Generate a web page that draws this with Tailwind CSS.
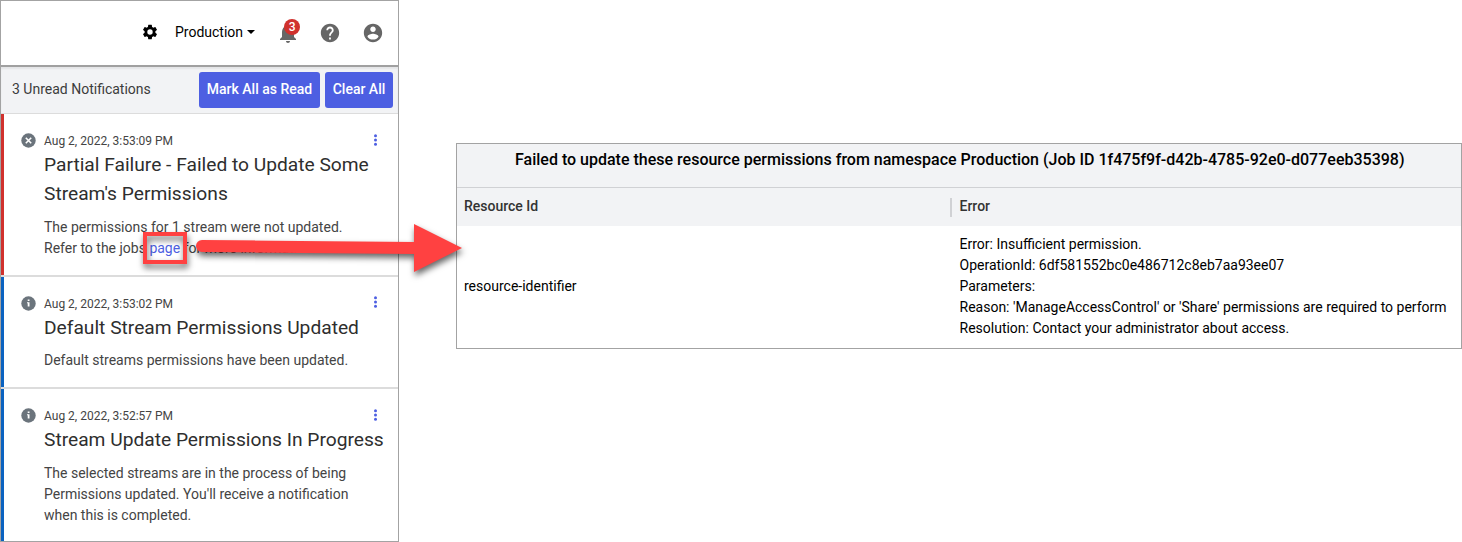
<!DOCTYPE html>
<html lang="en">
<head>
<meta charset="utf-8">
<title>Notifications</title>
<script src="https://cdn.jsdelivr.net/npm/@tailwindcss/browser@4"></script>
</head>
<body class="relative h-[542px] w-[1462px] overflow-hidden bg-white font-['Roboto',sans-serif] text-[14px] leading-[21px] text-black">
<div class="flex items-start gap-[57px]">

  <aside class="flex h-[542px] w-[399px] shrink-0 flex-col border border-[#a3a3a3] bg-white">
    <header class="flex h-[64px] shrink-0 items-center">
      <svg class="mb-[2px] ml-[139.500px] size-[18px]" viewBox="0 0 24 24"><path d="M19.14 12.94c.04-.3.06-.61.06-.94 0-.32-.02-.64-.07-.94l2.03-1.58a.49.49 0 0 0 .12-.61l-1.92-3.32a.49.49 0 0 0-.59-.22l-2.39.96c-.5-.38-1.03-.7-1.62-.94l-.36-2.54a.48.48 0 0 0-.48-.41h-3.84a.47.47 0 0 0-.47.41l-.36 2.54c-.59.24-1.13.57-1.62.94l-2.39-.96a.48.48 0 0 0-.59.22L2.74 8.87a.47.47 0 0 0 .12.61l2.03 1.58c-.05.3-.09.63-.09.94s.02.64.07.94l-2.03 1.58a.49.49 0 0 0-.12.61l1.92 3.32c.12.22.37.29.59.22l2.39-.96c.5.38 1.03.7 1.62.94l.36 2.54c.05.24.24.41.48.41h3.84c.24 0 .44-.17.47-.41l.36-2.54c.59-.24 1.13-.56 1.62-.94l2.39.96c.22.08.47 0 .59-.22l1.92-3.32a.47.47 0 0 0-.12-.61zM12 15.6A3.6 3.6 0 1 1 12 8.400a3.600 3.600 0 0 1 0 7.200z"/></svg>
      <span class="mb-[2px] ml-[16.500px] whitespace-nowrap">Production</span>
      <span class="mb-[2px] ml-[4px] border-x-[4px] border-t-[4px] border-x-transparent border-t-black"></span>
      <div class="relative ml-[21px] size-[24px]">
        <svg class="size-[24px] fill-[#666]" viewBox="0 0 24 24"><path d="M12 22c1.100 0 2-.9 2-2h-4c0 1.100.89 2 2 2zm6-6v-5c0-3.070-1.640-5.640-4.500-6.320V4c0-.83-.67-1.500-1.500-1.500s-1.500.67-1.500 1.500v.68C7.630 5.360 6 7.920 6 11v5l-2 2v1h16v-1l-2-2z"/></svg>
        <span class="absolute -top-[2px] left-[8px] flex size-[16px] items-center justify-center rounded-full bg-[#d0312d] text-[12px] font-medium leading-none text-white">3</span>
      </div>
      <svg class="ml-[19px] size-[22px] fill-[#666]" viewBox="0 0 24 24"><path d="M12 2C6.480 2 2 6.480 2 12s4.480 10 10 10 10-4.480 10-10S17.520 2 12 2zm1 17h-2v-2h2v2zm2.070-7.750l-.9.920C13.450 12.900 13 13.500 13 15h-2v-.5c0-1.100.45-2.100 1.170-2.830l1.240-1.260c.37-.36.59-.86.59-1.410 0-1.100-.9-2-2-2s-2 .9-2 2H8c0-2.210 1.790-4 4-4s4 1.790 4 4c0 .88-.36 1.680-.93 2.250z"/></svg>
      <svg class="ml-[21px] size-[22px] fill-[#666]" viewBox="0 0 24 24"><path d="M12 2C6.480 2 2 6.480 2 12s4.480 10 10 10 10-4.480 10-10S17.520 2 12 2zm0 3c1.660 0 3 1.340 3 3s-1.340 3-3 3-3-1.340-3-3 1.340-3 3-3zm0 14.200c-2.500 0-4.710-1.280-6-3.220.03-1.990 4-3.080 6-3.080 1.990 0 5.970 1.090 6 3.080-1.290 1.940-3.500 3.220-6 3.220z"/></svg>
    </header>

    <div class="flex h-[49px] shrink-0 items-center border-t-2 border-b border-t-[#a0a0a0] border-b-[#dcdcdc] bg-[#f2f3f5] pl-[11px] pr-[5px] text-[#3c3c3c] shadow-[inset_0_2px_2px_rgba(0,0,0,0.06)]">
      <span class="mb-[2px] grow whitespace-nowrap">3 Unread Notifications</span>
      <button class="mr-[5px] h-[36px] w-[121px] whitespace-nowrap rounded-[3px] bg-[#4d5fe2] pb-[2px] font-medium text-white">Mark All as Read</button>
      <button class="h-[36px] w-[68px] whitespace-nowrap rounded-[3px] bg-[#4d5fe2] pb-[2px] font-medium text-white">Clear All</button>
    </div>

    <article class="flex h-[163px] shrink-0 border-b-2 border-[#dcdcdc] text-[#444]">
      <div class="w-[3px] shrink-0 bg-[#d0312d]"></div>
      <svg class="ml-[17px] mt-[19px] size-[15px] shrink-0" viewBox="0 0 15 15"><circle cx="7.500" cy="7.500" r="7.200" fill="#6b747c"/><path d="M4.800 4.800l5.400 5.400M10.200 4.800l-5.400 5.400" stroke="#fff" stroke-width="1.600"/></svg>
      <div class="ml-[8px] min-w-0 grow pt-[17px]">
        <div class="flex h-[19px] items-start justify-between pr-[20px] text-[12px] leading-[20px]"><span>Aug 2, 2022, 3:53:09 PM</span>
          <svg class="mt-[2.500px] h-[12px] w-[5px] fill-[#4d5fe2]" viewBox="0 0 5 12"><circle cx="2.500" cy="1.700" r="1.500"/><circle cx="2.500" cy="6" r="1.500"/><circle cx="2.500" cy="10.300" r="1.500"/></svg></div>
        <h2 class="whitespace-nowrap text-[19.2px] leading-[29px] text-[#2e2e2e]">Partial Failure - Failed to Update Some<br>Stream's Permissions</h2>
        <p class="mt-[9px] whitespace-nowrap">The permissions for 1 stream were not updated.<br>Refer to the jobs <a class="text-[#4d5fe2]">page</a> for more information.</p>
      </div>
    </article>

    <article class="flex h-[112px] shrink-0 border-b-2 border-[#dcdcdc] text-[#444]">
      <div class="w-[3px] shrink-0 bg-[#0a62c0]"></div>
      <svg class="ml-[17px] mt-[19px] size-[15px] shrink-0" viewBox="0 0 15 15"><circle cx="7.500" cy="7.500" r="7.200" fill="#6b747c"/><path d="M6.700 3.500h1.800v1.600H6.700zM6 6.300h2.500v4.200H6.700V7.300H6z" fill="#fff"/></svg>
      <div class="ml-[8px] min-w-0 grow pt-[17px]">
        <div class="flex h-[19px] items-start justify-between pr-[20px] text-[12px] leading-[20px]"><span>Aug 2, 2022, 3:53:02 PM</span>
          <svg class="mt-[2px] h-[12px] w-[5px] fill-[#4d5fe2]" viewBox="0 0 5 12"><circle cx="2.500" cy="1.700" r="1.500"/><circle cx="2.500" cy="6" r="1.500"/><circle cx="2.500" cy="10.300" r="1.500"/></svg></div>
        <h2 class="whitespace-nowrap text-[19.2px] leading-[29px] text-[#2e2e2e]">Default Stream Permissions Updated</h2>
        <p class="mt-[8px] whitespace-nowrap">Default streams permissions have been updated.</p>
      </div>
    </article>

    <article class="flex grow text-[#444]">
      <div class="w-[3px] shrink-0 bg-[#0a62c0]"></div>
      <svg class="ml-[17px] mt-[19px] size-[15px] shrink-0" viewBox="0 0 15 15"><circle cx="7.500" cy="7.500" r="7.200" fill="#6b747c"/><path d="M6.700 3.500h1.800v1.600H6.700zM6 6.300h2.500v4.200H6.700V7.300H6z" fill="#fff"/></svg>
      <div class="ml-[8px] min-w-0 grow pt-[17px]">
        <div class="flex h-[19px] items-start justify-between pr-[20px] text-[12px] leading-[20px]"><span>Aug 2, 2022, 3:52:57 PM</span>
          <svg class="mt-[2.500px] h-[12px] w-[5px] fill-[#4d5fe2]" viewBox="0 0 5 12"><circle cx="2.500" cy="1.700" r="1.500"/><circle cx="2.500" cy="6" r="1.500"/><circle cx="2.500" cy="10.300" r="1.500"/></svg></div>
        <h2 class="whitespace-nowrap text-[19.2px] leading-[29px] text-[#2e2e2e]">Stream Update Permissions In Progress</h2>
        <p class="mt-[9px] whitespace-nowrap">The selected streams are in the process of being<br>Permissions updated. You'll receive a notification<br>when this is completed.</p>
      </div>
    </article>
  </aside>

  <section class="mt-[143px] flex h-[206px] w-[1006px] shrink-0 flex-col border border-[#a3a3a3] bg-white">
    <h1 class="h-[44px] shrink-0 whitespace-nowrap border-b border-[#d0d1d4] bg-[#f2f3f5] pl-[58px] pt-[5px] text-[16px] font-medium">Failed to update these resource permissions from namespace Production (Job ID 1f475f9f-d42b-4785-92e0-d077eeb35398)</h1>
    <div class="flex h-[38px] shrink-0 items-center bg-[#f2f3f5] font-medium text-[#333]">
      <span class="w-[493px] pb-[2px] pl-[7px]">Resource Id</span>
      <span class="flex h-[19px] items-center border-l-2 border-[#d0d1d4] pb-[2px] pl-[7.500px]">Error</span>
    </div>
    <div class="flex grow items-center pb-[2px]">
      <span class="w-[502.500px] shrink-0 pl-[7px]">resource-identifier</span>
      <div class="whitespace-nowrap">Error: Insufficient permission.<br>OperationId: 6df581552bc0e486712c8eb7aa93ee07<br>Parameters:<br>Reason: 'ManageAccessControl' or 'Share' permissions are required to perform<br>Resolution: Contact your administrator about access.</div>
    </div>
  </section>
</div>

<svg class="absolute left-0 top-0 h-[542px] w-[1462px] overflow-visible drop-shadow-[1px_4px_3px_rgba(0,0,0,0.6)]" viewBox="0 0 1462 542">
  <rect x="145" y="234" width="40" height="28" fill="none" stroke="#ff4141" stroke-width="4"/>
  <path d="M202 240L414 242V224L462 248L414 272V254L202 252A6 6 0 0 1 202 240Z" fill="#ff4141"/>
</svg>
</body>
</html>
